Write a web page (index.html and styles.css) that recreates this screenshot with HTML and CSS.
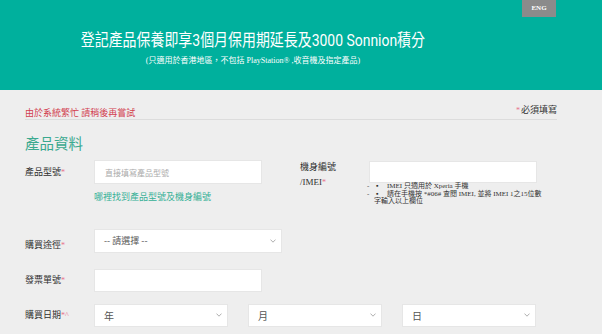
FILE: index.html
```html
<!DOCTYPE html>
<html lang="zh-Hant">
<head>
    <meta charset="UTF-8">
    <meta name="viewport" content="width=device-width, initial-scale=1.0">
    <title>產品登記</title>
    <link rel="stylesheet" href="styles.css">
</head>
<body>
    <!--top banner with the offer-->
    <div class="banner">
        <a class="lang-btn" href="#">ENG</a>
        <div class="banner-text">
            <h1><span>登記產品保養即享3個月保用期延長及3000 Sonnion積分</span></h1>
            <p><span>(只適用於香港地區，不包括 PlayStation® ,收音機及指定產品)</span></p>
        </div>
    </div>

    <!--form content-->
    <div class="container">
        <div class="notice-row">
            <span class="error-msg">由於系統繁忙 請稍後再嘗試</span>
            <span class="required-note"><b class="star">*</b>必須填寫</span>
        </div>

        <h2 class="section-title">產品資料</h2>

        <div class="form-row">
            <div class="field">
                <label class="label">產品型號<b class="star">*</b></label>
                <div class="control">
                    <input type="text" class="text-input" placeholder="直接填寫產品型號">
                    <a href="#" class="help-link">哪裡找到產品型號及機身編號</a>
                </div>
            </div>
            <div class="field">
                <label class="label label-tall">機身編號<br>/IMEI<b class="star">*</b></label>
                <div class="control">
                    <input type="text" class="text-input imei-input">
                    <ul class="hint-list">
                        <li><span class="dash">-</span><span class="dot">▪</span>IMEI 只適用於 Xperia 手機</li>
                        <li><span class="dash">-</span><span class="dot">▪</span>請在手機按 *#06# 查閱 IMEI, 並將 IMEI 1之15位數<br>字輸入以上欄位</li>
                    </ul>
                </div>
            </div>
        </div>

        <div class="form-row row-gap-big">
            <div class="field">
                <label class="label label-low">購買途徑<b class="star">*</b></label>
                <div class="select select-wide">
                    <span>-- 請選擇 --</span>
                    <svg viewBox="0 0 6 4"><path d="M0.5 0.6 L3 3.2 L5.5 0.6" fill="none" stroke="#9a9a9a" stroke-width="0.8"/></svg>
                </div>
            </div>
        </div>

        <div class="form-row row-gap">
            <div class="field">
                <label class="label label-short">發票單號<b class="star">*</b></label>
                <input type="text" class="text-input input-short">
            </div>
        </div>

        <div class="form-row row-gap">
            <div class="field">
                <label class="label label-short">購買日期<b class="star">*^</b></label>
                <div class="date-group">
                    <div class="select select-date">
                        <span>年</span>
                        <svg viewBox="0 0 6 4"><path d="M0.5 0.6 L3 3.2 L5.5 0.6" fill="none" stroke="#9a9a9a" stroke-width="0.8"/></svg>
                    </div>
                    <div class="select select-date">
                        <span>月</span>
                        <svg viewBox="0 0 6 4"><path d="M0.5 0.6 L3 3.2 L5.5 0.6" fill="none" stroke="#9a9a9a" stroke-width="0.8"/></svg>
                    </div>
                    <div class="select select-date">
                        <span>日</span>
                        <svg viewBox="0 0 6 4"><path d="M0.5 0.6 L3 3.2 L5.5 0.6" fill="none" stroke="#9a9a9a" stroke-width="0.8"/></svg>
                    </div>
                </div>
            </div>
        </div>
    </div>
</body>
</html>
```

FILE: styles.css
```css
/* page base */
body {
    margin: 0;
    background-color: #eeeeee;
    color: #333;
    font-family: "Liberation Serif", "Noto Sans CJK TC", serif;
}

/* teal banner at the top */
.banner {
    position: relative;
    height: 90px;
    background-color: #00b09d;
    color: #fff;
}

/* language switch button */
.lang-btn {
    position: absolute;
    top: 0;
    right: 46px;
    width: 34px;
    height: 17px;
    background-color: #8b8b8b;
    color: #fff;
    font-size: 7px;
    font-weight: bold;
    line-height: 17px;
    text-align: center;
    text-decoration: none;
}

.banner-text {
    padding: 29px 96px 0 0;
    text-align: center;
}

.banner-text h1 {
    margin: 0;
    font-family: Roboto, "Noto Sans CJK TC", sans-serif;
    font-size: 17px;
    font-weight: normal;
    line-height: 22px;
}

.banner-text h1 span {
    display: inline-block;
    transform: scaleX(0.82);
}

.banner-text p {
    margin: 4px 0 0;
    font-size: 8px;
    line-height: 12px;
}

/* form area */
.container {
    padding: 14px 45px 0 25px;
}

.notice-row {
    display: flex;
    justify-content: space-between;
    align-items: flex-start;
    height: 15px;
    border-bottom: 1px solid #dcdcdc;
}

.error-msg {
    padding-top: 3px;
    color: #d2404f;
    font-size: 9px;
    line-height: 12px;
}

.required-note {
    font-size: 9px;
    line-height: 12px;
    color: #333;
}

.star {
    color: #e8708c;
    font-size: 8px;
    font-weight: normal;
    line-height: 1;
}

.required-note .star {
    margin-right: 1px;
}

.section-title {
    margin: 13px 0 7px;
    color: #3aa98f;
    font-family: "Noto Sans CJK TC", sans-serif;
    font-size: 14.5px;
    font-weight: normal;
    line-height: 20px;
}

/* rows of fields */
.form-row {
    display: flex;
    gap: 38px;
}

.row-gap-big {
    margin-top: 23px;
}

.row-gap {
    margin-top: 12px;
}

.field {
    display: flex;
}

.label {
    width: 69px;
    flex-shrink: 0;
    color: #2e2e2e;
    font-size: 9px;
    line-height: 24px;
}

.label-tall {
    line-height: 15px;
}

.label-low {
    padding-top: 4px;
}

.label-short {
    line-height: 23px;
}

.control {
    display: flex;
    flex-direction: column;
}

.text-input {
    width: 168px;
    height: 24px;
    margin: 0;
    padding: 0 10px;
    box-sizing: border-box;
    border: 1px solid #e6e6e6;
    background-color: #fff;
    font-family: "Noto Sans CJK TC", sans-serif;
    font-size: 8px;
    outline: none;
}

.text-input::placeholder {
    color: #aaa;
}

.imei-input {
    height: 22px;
    margin-top: 1px;
}

.input-short {
    height: 23px;
}

.help-link {
    margin-top: 7px;
    color: #35b096;
    font-size: 9px;
    line-height: 12px;
    text-decoration: none;
}

/* small notes under IMEI */
.hint-list {
    list-style: none;
    margin: 0 0 0 -2px;
    padding: 0;
    font-size: 7px;
    line-height: 7.5px;
}

.hint-list li {
    padding-left: 7px;
}

.dash {
    display: inline-block;
    width: 9px;
    margin-left: -7px;
}

.dot {
    display: inline-block;
    width: 11px;
}

/* dropdown boxes */
.select {
    display: flex;
    align-items: center;
    justify-content: space-between;
    height: 24px;
    padding: 0 5px 0 9px;
    box-sizing: border-box;
    border: 1px solid #e6e6e6;
    background-color: #fff;
    color: #555;
    font-family: "Noto Sans CJK TC", sans-serif;
    font-size: 9px;
}

.select svg {
    width: 6px;
    height: 4px;
}

.select-wide {
    width: 188px;
}

.date-group {
    display: flex;
    gap: 20px;
}

.select-date {
    width: 134px;
    height: 23px;
    font-size: 10px;
}
```
